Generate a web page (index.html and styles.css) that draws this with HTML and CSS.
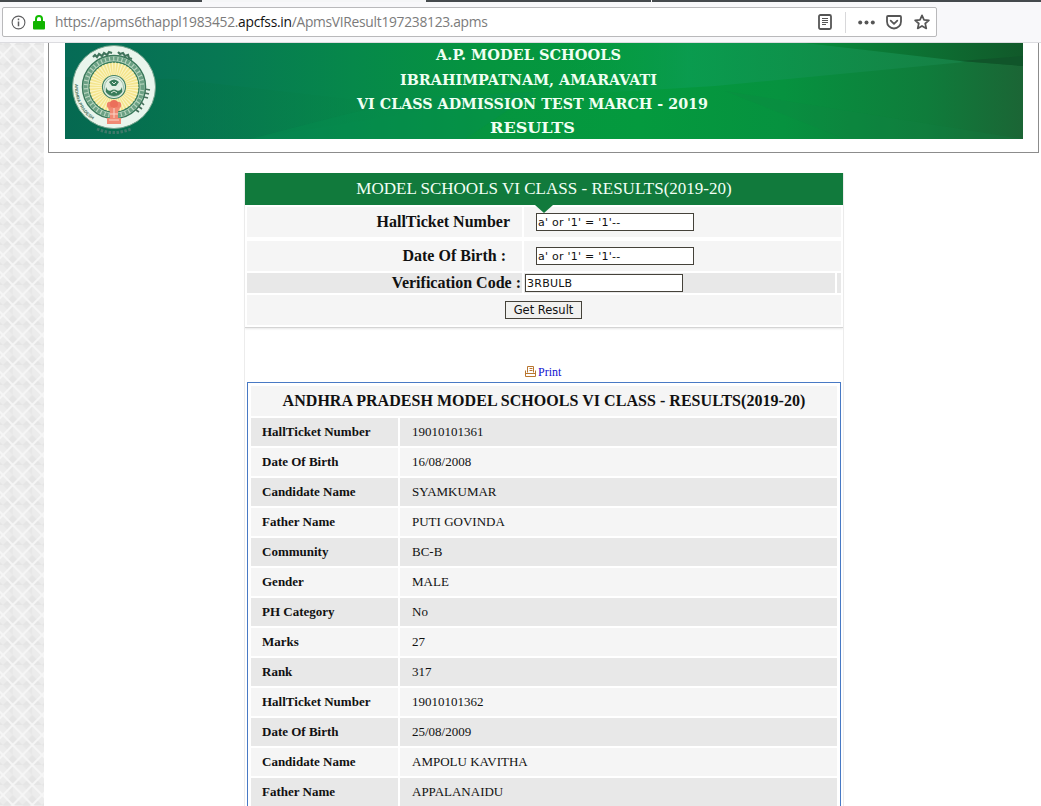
FILE: index.html
```
<!DOCTYPE html>
<html lang="en">
<head>
<meta charset="utf-8">
<title>A.P. Model Schools - Results</title>
<link rel="stylesheet" href="styles.css">
</head>
<body>
<header class="browser">
  <div class="tabs"><i class="tab-dark first"></i><i class="tab-active"></i><i class="tab-dark mid"></i><i class="tab-dark rest"></i></div>
  <div class="urlbar">
    <svg class="info" width="15" height="15" viewBox="0 0 15 15"><circle cx="7.5" cy="7.5" r="6.4" fill="none" stroke="#5e5e60" stroke-width="1.1"/><path d="M7.5 6.5v4.8M7.5 3.6v1.7" stroke="#5e5e60" stroke-width="1.5"/></svg>
    <svg class="lock" width="12" height="15" viewBox="0 0 12 15"><path d="M3 7V4a3 3 0 0 1 6 0v3" fill="none" stroke="#12bc00" stroke-width="2"/><rect x="0" y="6" width="12" height="8.5" rx="1" fill="#12b400"/></svg>
    <span class="url">https://apms6thappl1983452.<b>apcfss.in</b>/ApmsVIResult197238123.apms</span>
    <svg class="reader" width="14" height="16" viewBox="0 0 14 16"><rect x="1" y="1" width="12" height="14" rx="1.5" fill="none" stroke="#555" stroke-width="1.8"/><path d="M4 4.5h6M4 6.5h6M4 8.5h6M4 10.5h4" stroke="#555"/></svg>
    <i class="divider"></i>
    <svg class="dots" width="17" height="5" viewBox="0 0 17 5"><circle cx="2.2" cy="2.5" r="2" fill="#555"/><circle cx="8.5" cy="2.5" r="2" fill="#555"/><circle cx="14.8" cy="2.5" r="2" fill="#555"/></svg>
    <svg class="pocket" width="16" height="15" viewBox="0 0 16 15"><path d="M2 1h12q1 0 1 1v4.500a7 7 0 0 1-14 0V2q0-1 1-1z" fill="none" stroke="#555" stroke-width="1.8"/><path d="M4.700 5.700L8 8.800l3.300-3.100" fill="none" stroke="#555" stroke-width="1.800" stroke-linecap="round" stroke-linejoin="round"/></svg>
    <svg class="star" width="16" height="16" viewBox="0 0 16 16"><path d="M8 1.300l2 4.500 4.900.5-3.700 3.200 1.100 4.900L8 11.900l-4.300 2.500 1.100-4.900L1.100 6.300 6 5.800z" fill="none" stroke="#555" stroke-width="1.700" stroke-linejoin="round"/></svg>
  </div>
</header>
<div class="page">
  <aside class="pattern">
    <svg width="44" height="763">
      <defs><pattern id="weave" width="19.5" height="20" patternUnits="userSpaceOnUse" patternTransform="translate(3 12)">
        <rect width="19.500" height="20" fill="#ececec"/>
        <path d="M9.750 0L19.500 10H0z" fill="#e5e5e5"/><path d="M0 10l9.750 10V10z" fill="#e7e7e7"/>
        <path d="M-2 -2L21.500 22M-2 22L21.500 -2" stroke="#f6f6f6" stroke-width="2"/>
      </pattern></defs>
      <rect width="44" height="763" fill="url(#weave)"/>
    </svg>
  </aside>
  <main class="content">
    <div class="masthead">
      <svg class="banner" width="958" height="96" viewBox="0 0 958 96">
        <defs>
          <linearGradient id="base"><stop offset="0" stop-color="#066b56"/><stop offset=".16" stop-color="#077853"/><stop offset=".3" stop-color="#06884a"/><stop offset=".44" stop-color="#05953f"/><stop offset=".6" stop-color="#049a3e"/><stop offset=".75" stop-color="#06923f"/><stop offset=".9" stop-color="#0f7c3b"/><stop offset="1" stop-color="#1b6535"/></linearGradient>
          <linearGradient id="sweep"><stop offset="0" stop-color="#05684f"/><stop offset="1" stop-color="#078c45" stop-opacity=".3"/></linearGradient>
          <linearGradient id="corner"><stop offset="0" stop-color="#078b3c"/><stop offset="1" stop-color="#11592a"/></linearGradient>
          <linearGradient id="mint"><stop offset="0" stop-color="#079b45" stop-opacity="0"/><stop offset=".3" stop-color="#0b9c52"/><stop offset="1" stop-color="#188147"/></linearGradient>
        </defs>
        <rect width="958" height="96" fill="url(#base)"/>
        <path d="M0 34L110 36L370 66L185 96H0z" fill="url(#sweep)" opacity=".75"/>
        <path d="M185 96L282 71L360 54L470 49L400 96z" fill="#078f51" opacity=".35"/>
        <path d="M500 0H740L910 18L650 43L500 52z" fill="url(#mint)" opacity=".8"/>
        <path d="M740 0H958V23L895 18z" fill="url(#corner)"/>
        <path d="M895 18L958 13V23z" fill="#10552a"/>
        <path d="M660 48L958 96H780z" fill="#138044" opacity=".2"/>
        <g>
          <circle cx="49" cy="44" r="41.500" fill="#e9f5ec" stroke="#74a38c"/>
          <circle cx="49" cy="44" r="31.500" fill="#b8d5bf" stroke="#39785a" stroke-width="1.500"/>
          <circle cx="49" cy="44" r="28.500" fill="none" stroke="#6ba184" stroke-width="4" stroke-dasharray="3 1.200"/>
          <circle cx="49" cy="44" r="25" fill="#f4e58e" stroke="#377c5d" stroke-width="1.300"/>
          <circle cx="49" cy="44" r="18" fill="none" stroke="#fbf4c4" stroke-width="13" stroke-dasharray="1 1.500"/>
          <circle cx="49" cy="44" r="11.500" fill="#e4f0e4" stroke="#418266" stroke-width="1.200"/>
          <circle cx="49" cy="44" r="9.500" fill="none" stroke="#6ba184" stroke-width=".6"/>
          <path d="M44 39q5-5 10 0l-3 4h-4zM41 44q2 5 5 3.500 3-2 6 0 3 1.500 5-3.500v5q-3 4-8 4t-8-4z" fill="#397c5a"/>
          <path d="M43 40l2 4M55 40l-2 4M46 50l3-2 3 2M47 39l2 2 2-2" stroke="#dcebdc" fill="none"/>
          <circle cx="45" cy="62" r="3.200" fill="#ef816a"/><circle cx="53" cy="62" r="3.200" fill="#ef816a"/><circle cx="49" cy="61" r="4" fill="#eb6f5a"/>
          <path d="M43 65h12l-2 4v6h3v6H42v-6h3v-6z" fill="#f08a74"/><path d="M45 71h8M44 77h10M49 65v10" stroke="#fbd6c8" stroke-width="1"/>
          <path id="rim-left" d="M10.500 38a38.700 38.700 0 0 0 26 43" fill="none"/>
          <path d="M28 14l2-2 2 2 2-3 3 2 2-3 3 2 2-3 3 1M53 9l2 2 3-1 2 3 3-1 1 3 3 1" fill="none" stroke="#40735b" stroke-width="2.200"/>
          <text class="rim"><textPath href="#rim-left" startOffset="3">ANDHRA PRADESH</textPath></text>
          <path d="M71 67l3 2M73 63l4 3M76 59l3 3M79 54l4 1M80 50l4 1M80 46l5 1" stroke="#476f5b" stroke-width="1.700"/>
          <path d="M32 86q16 7 34 0" fill="none" stroke="#3d7969" stroke-width="3" stroke-dasharray="2.500 1.500"/>
        </g>
        <g class="titles">
          <text x="371" y="17" textLength="185" lengthAdjust="spacingAndGlyphs">A.P. MODEL SCHOOLS</text>
          <text x="335" y="42" textLength="257" lengthAdjust="spacingAndGlyphs">IBRAHIMPATNAM, AMARAVATI</text>
          <text x="292" y="66" textLength="351" lengthAdjust="spacingAndGlyphs">VI CLASS ADMISSION TEST MARCH - 2019</text>
          <text x="425" y="90" textLength="85" lengthAdjust="spacingAndGlyphs">RESULTS</text>
        </g>
      </svg>
    </div>
    <section class="panel">
      <form class="search">
        <h1>MODEL SCHOOLS VI CLASS - RESULTS(2019-20)</h1>
        <div class="fields">
          <div class="row"><label class="lbl one">HallTicket Number</label><div class="cell"><input type="text" value="a' or '1' = '1'--"></div></div>
          <div class="row second"><label class="lbl two">Date Of Birth :</label><div class="cell"><input type="text" value="a' or '1' = '1'--"></div></div>
          <div class="row code"><label class="lbl three">Verification Code :</label><div class="cell"><input type="text" value="3RBULB"></div><div class="end"></div></div>
          <div class="submit"><button type="button">Get Result</button></div>
        </div>
      </form>
      <a class="print"><svg width="12" height="12" viewBox="0 0 12 12"><path d="M2.500 6.500V.5h6v6M.5 4.500v6h10v-6M.5 7.500h10M4.500 2.500h3M4.500 4.500h3" fill="none" stroke="#b9762f"/></svg>Print</a>
      <div class="results">
        <h2>ANDHRA PRADESH MODEL SCHOOLS VI CLASS - RESULTS(2019-20)</h2>
        <dl>
          <dt>HallTicket Number</dt><dd>19010101361</dd>
          <dt>Date Of Birth</dt><dd>16/08/2008</dd>
          <dt>Candidate Name</dt><dd>SYAMKUMAR</dd>
          <dt>Father Name</dt><dd>PUTI GOVINDA</dd>
          <dt>Community</dt><dd>BC-B</dd>
          <dt>Gender</dt><dd>MALE</dd>
          <dt>PH Category</dt><dd>No</dd>
          <dt>Marks</dt><dd>27</dd>
          <dt>Rank</dt><dd>317</dd>
          <dt>HallTicket Number</dt><dd>19010101362</dd>
          <dt>Date Of Birth</dt><dd>25/08/2009</dd>
          <dt>Candidate Name</dt><dd>AMPOLU KAVITHA</dd>
          <dt>Father Name</dt><dd>APPALANAIDU</dd>
        </dl>
      </div>
    </section>
  </main>
</div>
</body>
</html>
```
FILE: styles.css
```
* { box-sizing: border-box; }
body { margin: 0; height: 806px; overflow: hidden; background: #fff; font-family: "Liberation Serif", serif; color: #111; }
svg { display: block; flex: none; }
.browser { height: 43px; background: #f8f8fa; border-bottom: 1px solid #dcdce0; }
.tabs { display: flex; height: 2px; margin-bottom: 5px; }
.tab-dark { background: #454a4d; }
.first { width: 202px; }
.tab-active { width: 224px; background: #f5f6f7; }
.mid { width: 225px; margin-right: 1px; }
.rest { flex: 1; }
.urlbar { display: flex; align-items: center; width: 935px; height: 30px; margin-left: 2px; padding: 0 6px 0 8px; background: #fff; border: 1px solid #b9b9bb; border-radius: 2px; }
.lock { margin-left: 7px; }
.url { width: 770px; margin-left: 10px; font: 13.8px/28px "Open Sans", sans-serif; letter-spacing: -.28px; color: #7b7b7b; white-space: nowrap; }
.url b { font-weight: 400; color: #111; }
.reader { margin-left: -7px; }
.divider { width: 1px; height: 21px; margin: 0 12px 0 13px; background: #d8d8da; }
.pocket { margin-left: 11px; }
.star { margin-left: 12px; }
.page { display: flex; height: 763px; }
.pattern { width: 44px; }
.content { flex: 1; padding-left: 4px; }
.masthead { width: 991px; height: 110px; margin-bottom: 20px; padding-left: 16px; border: 1px solid #8c8c8c; border-top: 0; }
.titles { font: bold 15px "DejaVu Serif", serif; fill: #f0fff2; }
.rim { font: bold 4.4px "Liberation Sans", sans-serif; fill: #476f5b; }
.panel { width: 600px; height: 640px; margin: 0 0 0 196px; border: 1px solid #ececec; border-top: 0; }
.search { width: 598px; height: 155px; border-bottom: 1px solid #d4d4d4; box-shadow: 0 1px 2px #e8e8e8; }
h1 { position: relative; margin: 0; height: 32px; background: #117a3c; color: #f2fff5; text-align: center; font-size: 17.05px; font-weight: 400; line-height: 32px; }
h1::after { content: ""; position: absolute; left: 290px; top: 32px; border: solid transparent; border-width: 8px 9px 0; border-top-color: #117a3c; }
.fields { padding: 2px; }
.row { display: flex; gap: 2px; height: 30px; margin-bottom: 4px; }
.second { margin-bottom: 2px; }
.code { height: 20px; margin-bottom: 2px; }
.lbl { width: 275px; background: #f5f5f5; text-align: right; font-weight: 700; font-size: 16px; line-height: 30px; }
.one { padding-right: 12px; }
.two { padding-right: 16px; }
.three { padding-right: 1px; line-height: 20px; }
.cell { display: flex; flex: 1; align-items: center; padding-left: 12px; background: #f5f5f5; }
.code .cell { padding-left: 1px; }
.end { width: 4px; }
.code > * { background: #e8e8e8; }
input { width: 158px; height: 18px; padding: 0 1px; border: 1px solid #45423a; background: #fff; font: 11px "DejaVu Sans", sans-serif; letter-spacing: .25px; color: #111; }
.submit { display: flex; height: 30px; padding-right: 1px; justify-content: center; align-items: center; background: #f5f5f5; }
button { width: 77px; height: 18px; padding: 0; border: 1px solid #45423a; background: #f1f1ef; font: 11.5px "DejaVu Sans", sans-serif; color: #111; }
.print { display: flex; align-items: center; gap: 1px; height: 18px; margin: 35px 0 0 280px; color: #1010d0; font-size: 12px; }
.results { width: 594px; height: 460px; margin: 1px 0 0 2px; padding: 3px; border: 1px solid #4879c4; }
h2 { margin: 0 0 2px; height: 30px; background: #f5f5f5; font-size: 16px; letter-spacing: .04px; line-height: 30px; text-align: center; }
dl { display: grid; grid-template-columns: 147px 1fr; grid-auto-rows: 28px; gap: 2px; margin: 0; font-size: 13px; line-height: 28px; }
dt, dd { margin: 0; padding-left: 11px; background: #f5f5f5; }
dt { font-weight: 700; }
dd { padding-left: 12px; }
dt:nth-of-type(odd), dd:nth-of-type(odd) { background: #e8e8e8; }
```
